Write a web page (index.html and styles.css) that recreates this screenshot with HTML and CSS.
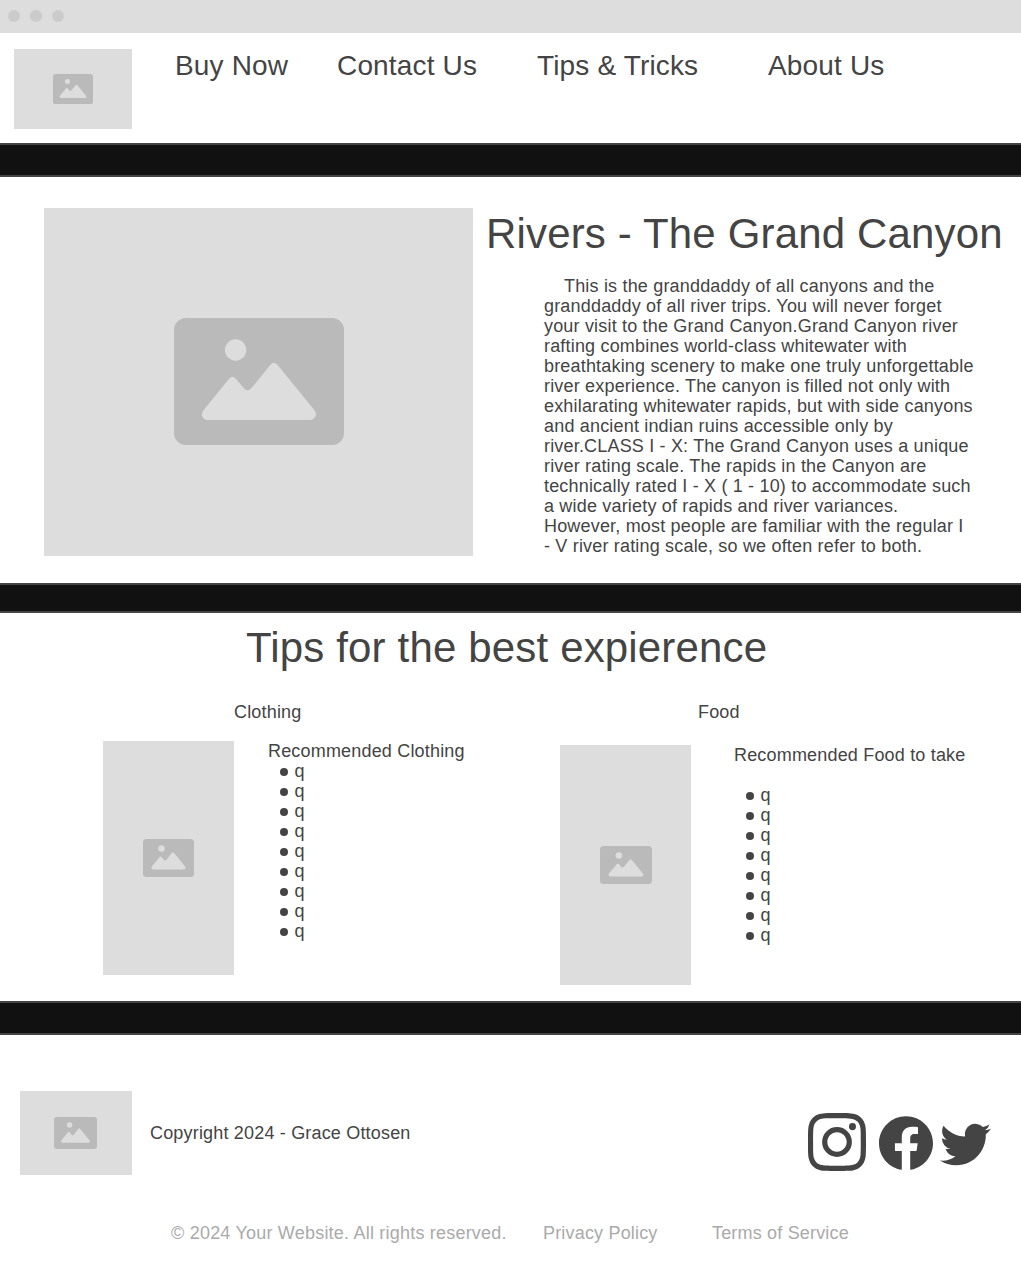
FILE: index.html
```html
<!DOCTYPE html>
<html lang="en">
<head>
<meta charset="utf-8">
<title>Rivers - The Grand Canyon</title>
<link rel="stylesheet" href="styles.css">
</head>
<body>
<svg class="defs" width="0" height="0" aria-hidden="true">
  <symbol id="picture" viewBox="0 0 170 127" preserveAspectRatio="none">
    <rect width="170" height="127" rx="12" fill="#bababa"/>
    <circle cx="61.6" cy="32" r="10.7" fill="#dddddd"/>
    <path fill="#dddddd" d="M29.5 92.3L54.7 61.2Q58.5 56.200 62.300 61.200L69.600 70Q73.500 74.500 77.500 70L96 47.200Q99.800 42.200 103.800 47.200L140.300 92C144 96.500 141 102 135.500 102H34.500C28.500 102 26 96.500 29.500 92.300Z"/>
  </symbol>
</svg>

<div class="window-bar"><i class="dot"></i><i class="dot"></i><i class="dot"></i></div>

<header class="header">
  <div class="placeholder logo"><svg width="40" height="30"><use href="#picture"/></svg></div>
  <nav class="nav">
    <a class="nav-buy">Buy Now</a>
    <a class="nav-contact">Contact Us</a>
    <a class="nav-tips">Tips &amp; Tricks</a>
    <a>About Us</a>
  </nav>
</header>

<div class="band"></div>

<main>
  <section class="hero">
    <div class="placeholder hero-picture"><svg width="170" height="127"><use href="#picture"/></svg></div>
    <div class="hero-copy">
      <h1>Rivers - The Grand Canyon</h1>
      <p>This is the granddaddy of all canyons and the<br>
      granddaddy of all river trips. You will never forget<br>
      your visit to the Grand Canyon.Grand Canyon river<br>
      rafting combines world-class whitewater with<br>
      breathtaking scenery to make one truly unforgettable<br>
      river experience. The canyon is filled not only with<br>
      exhilarating whitewater rapids, but with side canyons<br>
      and ancient indian ruins accessible only by<br>
      river.CLASS I - X: The Grand Canyon uses a unique<br>
      river rating scale. The rapids in the Canyon are<br>
      technically rated I - X ( 1 - 10) to accommodate such<br>
      a wide variety of rapids and river variances.<br>
      However, most people are familiar with the regular I<br>
      - V river rating scale, so we often refer to both.</p>
    </div>
  </section>

  <div class="band band-thin"></div>

  <section class="tips">
    <h2>Tips for the best expierence</h2>
    <div class="columns">
      <article class="clothing">
        <h3>Clothing</h3>
        <div class="tip-row">
          <div class="placeholder tip-picture"><svg width="51" height="38"><use href="#picture"/></svg></div>
          <div class="tip-copy">
            <p>Recommended Clothing</p>
            <ul><li>q</li><li>q</li><li>q</li><li>q</li><li>q</li><li>q</li><li>q</li><li>q</li><li>q</li></ul>
          </div>
        </div>
      </article>
      <article class="food">
        <h3>Food</h3>
        <div class="tip-row">
          <div class="placeholder tip-picture"><svg width="52" height="38"><use href="#picture"/></svg></div>
          <div class="tip-copy">
            <p>Recommended Food to take</p>
            <ul><li>q</li><li>q</li><li>q</li><li>q</li><li>q</li><li>q</li><li>q</li><li>q</li></ul>
          </div>
        </div>
      </article>
    </div>
  </section>
</main>

<div class="band"></div>

<footer class="footer">
  <div class="footer-main">
    <div class="placeholder footer-logo"><svg width="43" height="32"><use href="#picture"/></svg></div>
    <p class="copyright">Copyright 2024 - Grace Ottosen</p>
    <div class="social">
      <svg class="instagram" width="58" height="58" viewBox="0 0 24 24"><path d="M12 0C8.740 0 8.333.015 7.053.072 5.775.132 4.905.333 4.140.630c-.789.306-1.459.717-2.126 1.384S.935 3.350.630 4.140C.333 4.905.131 5.775.072 7.053.012 8.333 0 8.740 0 12s.015 3.667.072 4.947c.060 1.277.261 2.148.558 2.913.306.788.717 1.459 1.384 2.126.667.666 1.336 1.079 2.126 1.384.766.296 1.636.499 2.913.558C8.333 23.988 8.740 24 12 24s3.667-.015 4.947-.072c1.277-.060 2.148-.262 2.913-.558.788-.306 1.459-.718 2.126-1.384.666-.667 1.079-1.335 1.384-2.126.296-.765.499-1.636.558-2.913.060-1.280.072-1.687.072-4.947s-.015-3.667-.072-4.947c-.060-1.277-.262-2.149-.558-2.913-.306-.789-.718-1.459-1.384-2.126C21.319 1.347 20.651.935 19.860.630c-.765-.297-1.636-.499-2.913-.558C15.667.012 15.260 0 12 0zm0 2.160c3.203 0 3.585.016 4.850.071 1.170.055 1.805.249 2.227.415.562.217.960.477 1.382.896.419.420.679.819.896 1.381.164.422.360 1.057.413 2.227.057 1.266.070 1.646.070 4.850s-.015 3.585-.074 4.850c-.061 1.170-.256 1.805-.421 2.227-.224.562-.479.960-.899 1.382-.419.419-.824.679-1.380.896-.420.164-1.065.360-2.235.413-1.274.057-1.649.070-4.859.070-3.211 0-3.586-.015-4.859-.074-1.171-.061-1.816-.256-2.236-.421-.569-.224-.960-.479-1.379-.899-.421-.419-.690-.824-.900-1.380-.165-.420-.359-1.065-.420-2.235-.045-1.260-.061-1.649-.061-4.844 0-3.196.016-3.586.061-4.861.061-1.170.255-1.814.420-2.234.210-.570.479-.960.900-1.381.419-.419.810-.689 1.379-.898.420-.166 1.051-.361 2.221-.421 1.275-.045 1.650-.060 4.859-.060l.045.030zm0 3.678a6.162 6.162 0 1 0 0 12.324 6.162 6.162 0 1 0 0-12.324zM12 16c-2.210 0-4-1.790-4-4s1.790-4 4-4 4 1.790 4 4-1.790 4-4 4zm7.846-10.405a1.441 1.441 0 1 1-2.880 0 1.440 1.440 0 0 1 2.880 0z"/></svg>
      <svg class="facebook" width="54" height="54" viewBox="0 0 24 24"><path d="M24 12.073c0-6.627-5.373-12-12-12s-12 5.373-12 12c0 5.990 4.388 10.954 10.125 11.854v-8.385H7.078v-3.470h3.047V9.430c0-3.007 1.792-4.669 4.533-4.669 1.312 0 2.686.235 2.686.235v2.953H15.830c-1.491 0-1.956.925-1.956 1.874v2.250h3.328l-.532 3.470h-2.796v8.385C19.612 23.027 24 18.062 24 12.073z"/></svg>
      <svg class="twitter" width="51" height="51" viewBox="0 0 24 24"><path d="M23.953 4.570a10 10 0 0 1-2.825.775 4.958 4.958 0 0 0 2.163-2.723c-.951.555-2.005.959-3.127 1.184a4.920 4.920 0 0 0-8.384 4.482C7.690 8.095 4.067 6.130 1.640 3.162a4.822 4.822 0 0 0-.666 2.475c0 1.710.870 3.213 2.188 4.096a4.904 4.904 0 0 1-2.228-.616v.060a4.923 4.923 0 0 0 3.946 4.827 4.996 4.996 0 0 1-2.212.085 4.936 4.936 0 0 0 4.604 3.417 9.867 9.867 0 0 1-6.102 2.105c-.390 0-.779-.023-1.170-.067a13.995 13.995 0 0 0 7.557 2.209c9.053 0 13.998-7.496 13.998-13.985 0-.210 0-.420-.015-.630A9.935 9.935 0 0 0 24 4.590z"/></svg>
    </div>
  </div>
  <div class="legal">
    <span class="rights">© 2024 Your Website. All rights reserved.</span>
    <a class="privacy">Privacy Policy</a>
    <a>Terms of Service</a>
  </div>
</footer>
</body>
</html>
```
FILE: styles.css
```css
* { box-sizing: border-box; }

body {
  margin: 0;
  background: #fff;
  color: #444;
  font: 18px/20px "Liberation Sans", Arial, sans-serif;
  letter-spacing: 0.18px;
}

h1, h2, h3, p, ul { margin: 0; padding: 0; font-weight: 400; }
svg { display: block; }
.defs { position: absolute; }

.window-bar {
  display: flex;
  align-items: center;
  gap: 10px;
  height: 33px;
  padding: 0 8px 1px;
  background: #ddd;
}
.dot { width: 12px; height: 12px; border-radius: 50%; background: #cbcbcb; }

.placeholder {
  display: flex;
  flex: none;
  align-items: center;
  justify-content: center;
  background: #ddd;
}

.header { display: flex; height: 110px; padding: 16px 14px 0; }
.logo { width: 118px; height: 80px; }
.nav {
  display: flex;
  padding: 1px 0 0 43px;
  font-size: 28px;
  line-height: 31px;
  letter-spacing: 0.16px;
  white-space: nowrap;
}
.nav-buy { width: 162px; }
.nav-contact { width: 200px; }
.nav-tips { width: 231px; }

.band {
  height: 34px;
  border: solid #444;
  border-width: 2px 0;
  background: #111;
}
.band-thin { height: 30px; }

.hero { display: flex; height: 406px; padding: 31px 0 0 44px; }
.hero-picture { width: 429px; height: 348px; padding-bottom: 1px; }
.hero-copy { padding: 2px 0 0 10px; white-space: nowrap; }
h1, h2 { font-size: 42px; line-height: 47px; letter-spacing: 0.16px; }
h1 { padding-left: 3px; }
.hero-copy p { padding: 19px 0 0 61px; text-indent: 20px; }

.tips { height: 388px; padding-top: 11px; }
h2 { padding-left: 246px; }
h3 { font-size: 18px; line-height: 20px; }
.columns { display: flex; padding: 31px 0 0 103px; white-space: nowrap; }
.clothing { width: 457px; }
.clothing h3 { padding-left: 131px; }
.food h3 { padding-left: 138px; }
.tip-row { display: flex; gap: 34px; margin-top: 19px; }
.food .tip-row { gap: 43px; margin-top: 23px; }
.tip-picture { width: 131px; height: 234px; }
.food .tip-picture { height: 240px; }
ul { list-style: none; }
.food ul { margin-top: 20px; }
li { display: flex; padding-left: 12px; }
li::before {
  content: "";
  width: 8px;
  height: 8px;
  margin: 6.700px 6.500px 0 0;
  border-radius: 50%;
  background: #444;
}

.footer { padding: 56px 20px 0; white-space: nowrap; }
.footer-main { display: flex; align-items: flex-start; }
.footer-logo { width: 112px; height: 84px; padding-right: 1px; }
.copyright { padding: 32px 0 0 18px; }
.social { display: flex; margin: 22px 10px 0 auto; fill: #444; }
.facebook { margin: 3px 7px 0 13px; }
.twitter { margin-top: 6px; }
.legal { display: flex; padding: 48px 0 35px 151px; color: #aaa; }
.rights { width: 372px; letter-spacing: 0.21px; }
.privacy { width: 169px; }
```
